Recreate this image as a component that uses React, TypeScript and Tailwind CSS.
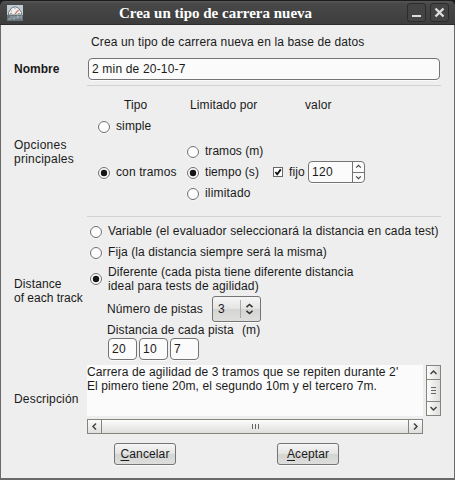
import React from "react";

function Radio({ checked = false }: { checked?: boolean }) {
  return (
    <svg className="block h-[14px] w-[14px] shrink-0" viewBox="0 0 14 14">
      <circle cx="7" cy="7" r="6.6" fill="#fafafa" />
      <circle cx="7" cy="7" r="5.5" fill="#fdfdfd" stroke="#6c6c6c" strokeWidth="1" />
      {checked && <circle cx="7" cy="7" r="3.2" fill="#151515" />}
    </svg>
  );
}

function Option({ label, checked, className = "" }: { label: string; checked?: boolean; className?: string }) {
  return (
    <div className={`flex h-[14px] items-center gap-[5px] ${className}`}>
      <div className="pt-[2px]">
        <Radio checked={checked} />
      </div>
      <span>{label}</span>
    </div>
  );
}

function Entry({ value, className = "" }: { value: string; className?: string }) {
  return (
    <div
      className={`flex h-[22px] items-center rounded-[4px] border border-[#747474] bg-[#fbfbfb] shadow-[0_1px_0_#fafafa] ${className}`}
    >
      {value}
    </div>
  );
}

function Chevron({ dir, size = 9 }: { dir: "up" | "down" | "left" | "right"; size?: number }) {
  const d = {
    up: "M1.5 6 L4.5 3 L7.5 6",
    down: "M1.5 3 L4.5 6 L7.5 3",
    left: "M6 1.5 L3 4.5 L6 7.5",
    right: "M3 1.5 L6 4.5 L3 7.5",
  }[dir];
  return (
    <svg width={size} height={size} viewBox="0 0 9 9" fill="none" stroke="#444" strokeWidth="1.5">
      <path d={d} />
    </svg>
  );
}

function Button({ hotkey, rest, className = "" }: { hotkey: string; rest: string; className?: string }) {
  return (
    <div
      className={`flex h-[22px] w-[62px] items-center justify-center rounded-[3px] border border-[#747474] bg-[linear-gradient(#f6f6f6,#e4e4e3_48%,#d4d4d2_50%,#dededc)] shadow-[0_1px_0_#fafafa] ${className}`}
    >
      <span>
        <span className="underline decoration-1 underline-offset-2">{hotkey}</span>
        {rest}
      </span>
    </div>
  );
}

function TitleBar() {
  return (
    <div className="flex h-[24px] items-center rounded-t-[5px] border-b border-[#2b2b2b] bg-[linear-gradient(#565656,#484848_12%,#3d3d3d)] pl-[7px] pr-[6px]">
      <svg className="h-4 w-4 shrink-0" viewBox="0 0 16 16">
        <rect width="16" height="16" fill="#bccbd5" />
        <path d="M1.5 10 V7.5 L4.5 3 Q8 0.5 11.5 3 L14.5 7.5 V10 Z" fill="#eeeeed" stroke="#77797b" strokeWidth="1" />
        <path d="M8 9 L11.5 5" stroke="#c37a68" strokeWidth="1.2" />
        <path d="M4 6 h1 M7.5 3.5 h1 M3 8.5 h2 M11 8.5 h2" stroke="#999" />
        <rect y="10" width="16" height="6" fill="#66747b" />
        <path d="M1 14 h3 V11 M6 11 v3 h2 v-3 M10 14 v-3 h1 v2 h1 v-2 M14 14 v-3 h1" fill="none" stroke="#aebcc4" strokeWidth="0.8" />
      </svg>
      <div className="flex-1 pl-[1px] text-center font-['Liberation_Serif',serif] text-[15px] font-bold leading-[16px] tracking-normal text-white">
        Crea un tipo de carrera nueva
      </div>
      <div className="flex gap-1">
        <div className="h-[19px] w-[19px] rounded-[3px] border border-[#2b2b2b] bg-[#444]">
          <svg viewBox="0 0 17 17">
            <rect x="4" y="11" width="9" height="2" fill="#ddd" />
          </svg>
        </div>
        <div className="h-[19px] w-[19px] rounded-[3px] border border-[#2b2b2b] bg-[#444]">
          <svg viewBox="0 0 17 17">
            <path d="M4.5 4.5 L12.5 12.5 M12.5 4.5 L4.5 12.5" stroke="#ddd" strokeWidth="2.4" />
          </svg>
        </div>
      </div>
    </div>
  );
}

export default function App() {
  return (
    <div className="flex h-[480px] w-[455px] flex-col overflow-hidden whitespace-pre bg-[#1c1c1c] font-['Liberation_Sans',Arial,sans-serif] text-[12px] leading-[14px] tracking-[0.12px] text-[#1a1a1a]">
      <div className="h-px shrink-0" />
      <TitleBar />
      <div className="flex flex-1 flex-col border-b-[2px] border-l border-r border-[#6a6a6a] bg-[#eeeeee] pl-[13px]">
        <div className="pl-[77px] pt-[10px]">Crea un tipo de carrera nueva en la base de datos</div>
        <div className="flex items-center pt-[9px]">
          <div className="w-[74px] font-bold tracking-normal">Nombre</div>
          <Entry value="2 min de 20-10-7" className="w-[352px] pl-[3px] tracking-[0.18px]" />
        </div>

        <div className="mt-[5px] flex h-[131px]">
          <div className="w-[73px] pt-[53px] tracking-[0.24px]">{"Opciones\nprincipales"}</div>
          <div className="w-[354px] border-t border-[#d2d2d2]">
            <div className="flex pt-[12px]">
              <div className="w-[66px] pl-[37px]">Tipo</div>
              <div className="ml-[37px] w-[115px]">Limitado por</div>
              <div>valor</div>
            </div>
            <Option label="simple" className="mt-[7px] pl-[10px]" />
            <div className="mt-[11px] flex">
              <Option label="con tramos" checked className="mt-[21px] w-[99px] pl-[10px]" />
              <div className="flex w-[86px] flex-col gap-[7px]">
                <Option label="tramos (m)" className="tracking-[0.04px]" />
                <Option label="tiempo (s)" checked className="tracking-[0.06px]" />
                <Option label="ilimitado" className="tracking-[0.18px]" />
              </div>
              <div className="mt-[17px] flex h-[22px] items-center">
                <svg className="ml-px h-[10px] w-[10px]" viewBox="0 0 10 10">
                  <rect x=".5" y=".5" width="9" height="9" fill="#fff" stroke="#686868" />
                  <path d="M2.4 5 L4.2 7.2 L7.8 2.4" fill="none" stroke="#111" strokeWidth="1.8" />
                </svg>
                <span className="ml-[6px] w-[19px]">fijo</span>
                <div className="flex h-[22px] w-[57px] rounded-[4px] border border-[#747474] bg-[#fbfbfb] shadow-[0_1px_0_#fafafa]">
                  <div className="flex w-[43px] items-center pl-[3px] tracking-[0.3px]">120</div>
                  <div className="flex flex-1 flex-col border-l border-[#747474]">
                    <div className="flex flex-1 items-center justify-center border-b border-[#747474]">
                      <Chevron dir="up" size={7} />
                    </div>
                    <div className="flex flex-1 items-center justify-center">
                      <Chevron dir="down" size={7} />
                    </div>
                  </div>
                </div>
              </div>
            </div>
          </div>
        </div>

        <div className="flex h-[149px]">
          <div className="w-[73px] pt-[61px]">
            <div>Distance</div>
            <div className="tracking-normal">of each track</div>
          </div>
          <div className="w-[354px] border-t border-[#d2d2d2] pl-[2px] pt-[7px]">
            <Option label="Variable (el evaluador seleccionará la distancia en cada test)" className="tracking-[0.13px]" />
            <Option label="Fija (la distancia siempre será la misma)" className="mt-[7px] tracking-[0.1px]" />
            <div className="mt-[6px] flex items-center gap-[5px]">
              <Radio checked />
              <div>
                <div className="tracking-[0.1px]">Diferente (cada pista tiene diferente distancia</div>
                <div className="tracking-[0.14px]">ideal para tests de agilidad)</div>
              </div>
            </div>
            <div className="mt-[3px] flex h-[26px] items-center pl-[18px]">
              <div className="w-[105px]">Número de pistas</div>
              <div className="flex h-[26px] w-[49px] items-center rounded-[3px] border border-[#747474] bg-[linear-gradient(#f6f6f6,#e4e4e3_48%,#d4d4d2_50%,#dededc)] pl-[5px] shadow-[0_1px_0_#fafafa]">
                <div className="w-[22px]">3</div>
                <div className="h-[18px] w-px bg-[#aaa]" />
                <svg className="ml-[4px] h-[12px] w-[9px]" viewBox="0 0 9 12" fill="none" stroke="#333" strokeWidth="1.6">
                  <path d="M1.5 4.2 L4.5 1.5 L7.5 4.2 M1.5 7.8 L4.5 10.5 L7.5 7.8" />
                </svg>
              </div>
            </div>
            <div className="flex pl-[18px] pt-px">
              <div className="w-[135px]">Distancia de cada pista</div>
              <div>(m)</div>
            </div>
            <div className="flex gap-[2px] pl-[19px] pt-px tracking-[0.3px]">
              <Entry value="20" className="w-[29px] pl-[3px]" />
              <Entry value="10" className="w-[29px] pl-[3px]" />
              <Entry value="7" className="w-[29px] pl-[3px]" />
            </div>
          </div>
        </div>

        <div className="flex">
          <div className="w-[73px] pt-[27px] tracking-[0.18px]">Descripción</div>
          <div className="w-[336px]">
            <div className="h-[51px] bg-[#fbfbfb]">
              <div className="tracking-[0.12px]">Carrera de agilidad de 3 tramos que se repiten durante 2'</div>
              <div className="tracking-[0.1px]">El pimero tiene 20m, el segundo 10m y el tercero 7m.</div>
            </div>
            <div className="mt-[3px] flex h-[15px] border border-[#85857d] bg-[linear-gradient(#fcfcfc,#dededd)]">
              <div className="flex w-[14px] items-center justify-center border-r border-[#85857d]">
                <Chevron dir="left" />
              </div>
              <div className="flex flex-1 items-center justify-center gap-[2px]">
                <div className="h-[5px] w-px bg-[#666]" />
                <div className="h-[5px] w-px bg-[#666]" />
                <div className="h-[5px] w-px bg-[#666]" />
              </div>
              <div className="flex w-[14px] items-center justify-center border-l border-[#85857d]">
                <Chevron dir="right" />
              </div>
            </div>
          </div>
          <div className="ml-[3px] flex h-[51px] w-[15px] flex-col border border-[#85857d] bg-[linear-gradient(90deg,#fcfcfc,#dededd)]">
            <div className="flex h-[14px] items-center justify-center border-b border-[#85857d]">
              <Chevron dir="up" />
            </div>
            <div className="flex flex-1 flex-col items-center justify-center gap-[2px]">
              <div className="h-px w-[5px] bg-[#666]" />
              <div className="h-px w-[5px] bg-[#666]" />
              <div className="h-px w-[5px] bg-[#666]" />
            </div>
            <div className="flex h-[14px] items-center justify-center border-t border-[#85857d]">
              <Chevron dir="down" />
            </div>
          </div>
        </div>

        <div className="flex gap-[101px] pl-[100px] pt-[9px]">
          <Button hotkey="C" rest="ancelar" />
          <Button hotkey="A" rest="ceptar" />
        </div>
      </div>
    </div>
  );
}
